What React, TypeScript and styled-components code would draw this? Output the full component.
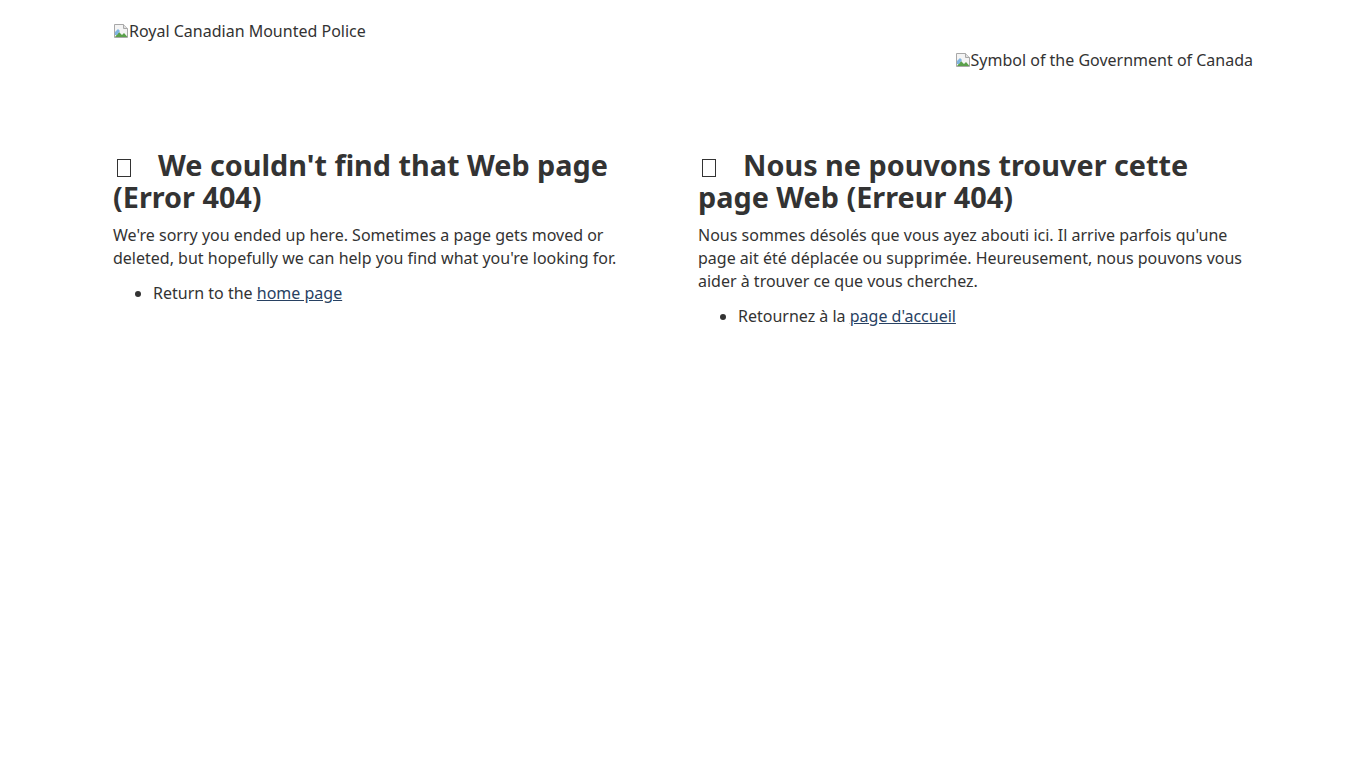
import React from 'react';
import styled, { createGlobalStyle } from 'styled-components';

const GlobalStyle = createGlobalStyle`
  body {
    margin: 0;
    background: #fff;
    color: #333;
    font-family: "Noto Sans", "DejaVu Sans", sans-serif;
    font-size: 16px;
    line-height: 23px;
  }
`;

const Page = styled.div`
  width: 1140px;
  margin: 0 auto;
  padding: 20px 0 0;
`;

const Header = styled.header`
  display: flex;
  justify-content: space-between;
  align-items: flex-start;
  height: 110px;
`;

const Brand = styled.div<{ $offset?: number }>`
  display: flex;
  align-items: flex-start;
  font-size: 16px;
  line-height: 22px;
  color: #333;
  margin-top: ${(p) => p.$offset ?? 0}px;
`;

const Columns = styled.main`
  display: grid;
  grid-template-columns: 1fr 1fr;
  column-gap: 30px;
  margin-top: 19px;
`;

const Section = styled.section``;

const Heading = styled.h2`
  margin: 0 0 11px;
  font-size: 28.8px;
  line-height: 32px;
  font-weight: 700;
  color: #333;
`;

const Glyph = styled.span`
  display: inline-block;
  width: 14px;
  height: 18px;
  border: 1px solid #333;
  box-sizing: border-box;
  margin: 0 27px 0 4px;
  vertical-align: -1px;
`;

const Text = styled.p`
  margin: 0 0 12px;
`;

const List = styled.ul`
  margin: 0;
  padding-left: 40px;
`;

const Link = styled.a`
  color: #284162;
  text-decoration: underline;
`;

const BrokenImage = () => (
  <svg width="16" height="16" viewBox="0 0 16 16" style={{ marginTop: 3, flexShrink: 0 }}>
    <path d="M1.5 1.5h9l4 4v9h-13z" fill="#f4f4f4" stroke="#a8a8a8" />
    <path d="M10.5 1.5v4h4" fill="#e0e0e0" stroke="#a8a8a8" />
    <path d="M2 14l4-5 3 3 2-2 3.5 4z" fill="#5aa04a" />
    <path d="M2 9l3-3 2 2-3 4H2z" fill="#7fb4e0" />
  </svg>
);

export default function App() {
  return (
    <>
      <GlobalStyle />
      <Page>
        <Header>
          <Brand>
            <BrokenImage />
            <span>Royal Canadian Mounted Police</span>
          </Brand>
          <Brand $offset={29}>
            <BrokenImage />
            <span>Symbol of the Government of Canada</span>
          </Brand>
        </Header>
        <Columns>
          <Section lang="en">
            <Heading>
              <Glyph />
              We couldn't find that Web page (Error 404)
            </Heading>
            <Text>
              We're sorry you ended up here. Sometimes a page gets moved or deleted, but hopefully we can help you find
              what you're looking for.
            </Text>
            <List>
              <li>
                Return to the <Link href="#">home page</Link>
              </li>
            </List>
          </Section>
          <Section lang="fr">
            <Heading>
              <Glyph />
              Nous ne pouvons trouver cette page Web (Erreur 404)
            </Heading>
            <Text>
              Nous sommes désolés que vous ayez abouti ici. Il arrive parfois qu'une page ait été déplacée ou supprimée.
              Heureusement, nous pouvons vous aider à trouver ce que vous cherchez.
            </Text>
            <List>
              <li>
                Retournez à la <Link href="#">page d'accueil</Link>
              </li>
            </List>
          </Section>
        </Columns>
      </Page>
    </>
  );
}
